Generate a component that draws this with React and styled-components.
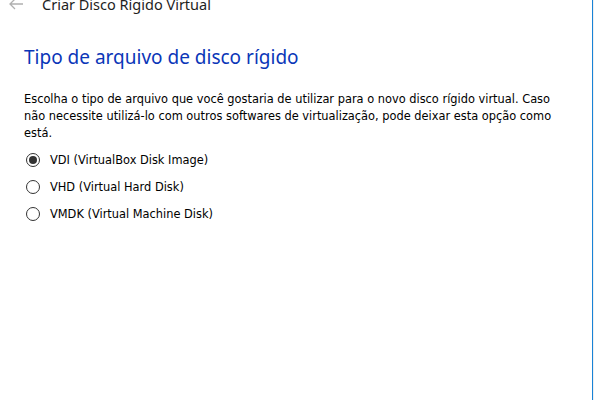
import React from "react";
import styled, { createGlobalStyle } from "styled-components";

const Global = createGlobalStyle`
  html, body { margin: 0; padding: 0; background: #ffffff; }
  body { width: 594px; height: 400px; overflow: hidden; }
`;

const Frame = styled.div`
  width: 594px;
  height: 400px;
  display: flex;
  background: #f0f0f0;
`;

const Window = styled.div`
  width: 592px;
  height: 400px;
  background: #ffffff;
  border-right: 1px solid #1883d7;
  display: flex;
  flex-direction: column;
  overflow: hidden;
`;

const TitleBar = styled.div`
  display: flex;
  align-items: center;
  height: 20px;
  margin-top: -6px;
  padding-left: 8px;
  gap: 18px;
  font-family: "Noto Sans", "Open Sans", sans-serif;
  font-size: 14.5px;
  color: #1e1e1e;
`;

const Content = styled.div`
  display: flex;
  flex-direction: column;
  padding: 0 24px;
`;

const Heading = styled.h1`
  margin: 30px 0 0;
  font-family: "Noto Sans", "Open Sans", sans-serif;
  font-weight: 400;
  font-size: 19px;
  line-height: 26px;
  color: #0a36b8;
`;

const Description = styled.p`
  margin: 21px 0 0;
  font-family: "DejaVu Sans", sans-serif;
  font-size: 11.4px;
  line-height: 17px;
  color: #000000;
  white-space: nowrap;
`;

const Options = styled.div`
  display: flex;
  flex-direction: column;
  gap: 9px;
  margin-top: 9px;
`;

const Option = styled.label`
  display: flex;
  align-items: center;
  gap: 10px;
  height: 18px;
  padding-left: 2px;
  font-family: "DejaVu Sans", sans-serif;
  font-size: 11.4px;
  color: #000;
`;

const Radio = styled.span`
  width: 14px;
  height: 14px;
  box-sizing: border-box;
  border-radius: 50%;
  border: 1px solid #333;
  background: #fff;
  display: flex;
  align-items: center;
  justify-content: center;
  &::after {
    content: "";
    width: 8px;
    height: 8px;
    border-radius: 50%;
    background: ${(p) => (p.$checked ? "#333" : "transparent")};
  }
`;

const BackArrow = () => (
  <svg width="16" height="12" viewBox="0 0 16 12">
    <path d="M15 6H2M7 1L2 6l5 5" fill="none" stroke="#b0b0b0" strokeWidth="1.3" />
  </svg>
);

const options = [
  { label: "VDI (VirtualBox Disk Image)", checked: true },
  { label: "VHD (Virtual Hard Disk)", checked: false },
  { label: "VMDK (Virtual Machine Disk)", checked: false },
];

export default function App() {
  return (
    <Frame>
      <Global />
      <Window>
        <TitleBar>
          <BackArrow />
          <span>Criar Disco Rígido Virtual</span>
        </TitleBar>
        <Content>
          <Heading>Tipo de arquivo de disco rígido</Heading>
          <Description>
            Escolha o tipo de arquivo que você gostaria de utilizar para o novo disco rígido virtual. Caso
            <br />
            não necessite utilizá-lo com outros softwares de virtualização, pode deixar esta opção como
            <br />
            está.
          </Description>
          <Options>
            {options.map((o) => (
              <Option key={o.label}>
                <Radio $checked={o.checked} />
                {o.label}
              </Option>
            ))}
          </Options>
        </Content>
      </Window>
    </Frame>
  );
}
